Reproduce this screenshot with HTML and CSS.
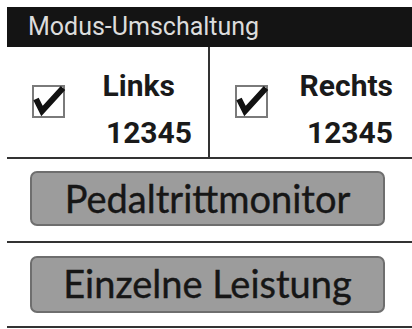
FILE: index.html
```html
<!DOCTYPE html>
<html lang="de">
<head>
<meta charset="utf-8">
<link rel="stylesheet" href="styles.css">
</head>
<body>
<div class="screen">
  <div class="title">Modus-Umschaltung</div>
  <div class="toggles">
    <div class="side side-left">
      <span class="check">
        <svg viewBox="0 0 33 33" width="33" height="33"><path d="M4 14 L10 26 L31 3" fill="none" stroke="#111" stroke-width="6" stroke-linejoin="miter"/></svg>
      </span>
      <div class="labels">
        <span class="name name-left">Links</span>
        <span class="num">12345</span>
      </div>
    </div>
    <div class="side side-right">
      <span class="check">
        <svg viewBox="0 0 33 33" width="33" height="33"><path d="M4 14 L10 26 L31 3" fill="none" stroke="#111" stroke-width="6" stroke-linejoin="miter"/></svg>
      </span>
      <div class="labels">
        <span class="name">Rechts</span>
        <span class="num">12345</span>
      </div>
    </div>
  </div>
  <div class="section section-1">
    <div class="btn btn-1">Pedaltrittmonitor</div>
  </div>
  <div class="section section-2">
    <div class="btn btn-2">Einzelne Leistung</div>
  </div>
</div>
</body>
</html>
```
FILE: styles.css
```css
html, body {
  margin: 0;
  padding: 0;
  background: #fff;
}
.screen {
  padding: 7px 0 0 7px;
  width: 405px;
}
.title {
  height: 40px;
  line-height: 40px;
  background: #141414;
  color: #dcdcdc;
  font-family: Roboto, "Liberation Sans", sans-serif;
  font-size: 25px;
  padding-left: 21px;
}
.toggles {
  display: flex;
  height: 110px;
  border-bottom: 2px solid #333;
}
.side {
  display: flex;
  align-items: flex-start;
}
.side-left {
  width: 201px;
  border-right: 2px solid #333;
}
.side-right {
  flex: 1;
}
.check {
  display: block;
  width: 29px;
  height: 29px;
  border: 2px solid #7a7a7a;
  margin: 38px 0 0 25px;
  position: relative;
}
.check svg {
  position: absolute;
  left: -2px;
  top: -2px;
  overflow: visible;
}
.labels {
  flex: 1;
  display: flex;
  flex-direction: column;
  align-items: flex-end;
  padding-top: 15px;
  font-family: Roboto, "Liberation Sans", sans-serif;
  font-weight: bold;
  font-size: 30px;
  line-height: 47px;
  color: #1a1a1a;
}
.side-left .labels {
  padding-right: 16px;
}
.side-right .labels {
  padding-right: 19px;
}
.name-left {
  margin-right: 17px;
}
.section {
  display: flex;
  justify-content: flex-start;
  border-bottom: 2px solid #333;
}
.section-1 {
  padding: 12px 0 15px 23px;
}
.section-2 {
  padding: 13px 0 13px 23px;
}
.btn {
  box-sizing: border-box;
  width: 355px;
  background: #9c9c9c;
  border: 2px solid #6e6e6e;
  border-radius: 7px;
  color: #161616;
  font-family: Lato, "Open Sans", sans-serif;
  font-size: 38px;
  text-align: center;
  -webkit-text-stroke: 0.4px #161616;
}
.btn-1 {
  height: 55px;
  line-height: 50px;
}
.btn-2 {
  height: 57px;
  line-height: 50px;
}
```
